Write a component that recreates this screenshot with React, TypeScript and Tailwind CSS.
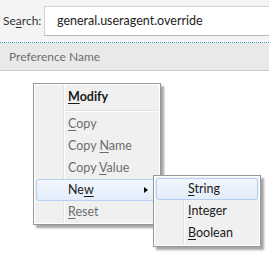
import React from 'react';

const font = { fontFamily: 'Lato, "Open Sans", sans-serif' };

function Key({ children }: { children: React.ReactNode }) {
  return <span className="underline underline-offset-2 decoration-1">{children}</span>;
}

function Item({
  children,
  disabled,
  bold,
  active,
  arrow,
}: {
  children: React.ReactNode;
  disabled?: boolean;
  bold?: boolean;
  active?: boolean;
  arrow?: boolean;
}) {
  return (
    <div
      className={
        'relative flex items-center h-[22px] pl-[31px] pr-2 rounded-[3px] border ' +
        (active
          ? 'border-[#b4cff2] bg-gradient-to-b from-[#f3f7fd] to-[#e2ecfa] '
          : 'border-transparent ') +
        (disabled ? 'text-[#6d6d6d] ' : 'text-[#1a1a1a] ') +
        (bold ? 'font-bold ' : '')
      }
    >
      <span className="flex-1">{children}</span>
      {arrow && (
        <span className="w-0 h-0 border-y-[3.5px] border-y-transparent border-l-[4px] border-l-black mr-[1px]" />
      )}
    </div>
  );
}

function Separator() {
  return (
    <div className="h-[5px] flex flex-col justify-center pl-[29px]">
      <div className="h-px bg-[#e0e0e0]" />
      <div className="h-px bg-white" />
    </div>
  );
}

export default function App() {
  return (
    <div className="relative w-[269px] h-[257px] bg-white overflow-hidden text-[12.5px]" style={font}>
      {/* search bar */}
      <div className="flex items-stretch h-[36px] pt-[6px] bg-[#f3f4f5]">
        <div className="w-[44px] pl-[3px] flex items-center text-[#333] text-[12px]">
          Se<Key>a</Key>rch:
        </div>
        <div className="flex-1 flex items-center pl-[12px] bg-white border-t border-l border-[#cfd2d5] border-b border-b-[#b9b9b9] text-[#222] text-[12.5px]">
          general.useragent.override
        </div>
      </div>
      <div className="h-[6px] bg-[#f3f4f5]" />
      <div className="h-px border-t border-dotted border-[#3aa3b8]" />
      {/* column header */}
      <div className="h-[28px] flex items-center pl-[9px] bg-[#e9e9e9] border-b border-[#cacaca] text-[#6e6e6e] text-[12px]">
        Preference Name
      </div>

      {/* context menu */}
      <div className="absolute left-[33px] top-[83px] w-[128px] border border-[#979797] bg-[#f0f0f0] shadow-[3px_3px_2px_rgba(0,0,0,0.35)] text-[12.5px]">
        <div className="relative border border-white p-[1px] pb-0">
          <div className="absolute left-[28px] top-0 bottom-0 w-[2px] flex">
            <div className="w-px bg-[#e2e3e3]" />
            <div className="w-px bg-white" />
          </div>
          <Item bold>
            <Key>M</Key>odify
          </Item>
          <Separator />
          <Item disabled>
            <Key>C</Key>opy
          </Item>
          <Item disabled>
            Copy <Key>N</Key>ame
          </Item>
          <Item disabled>
            Copy <Key>V</Key>alue
          </Item>
          <Item active arrow>
            Ne<Key>w</Key>
          </Item>
          <Item disabled>
            <Key>R</Key>eset
          </Item>
        </div>
      </div>

      {/* submenu */}
      <div className="absolute left-[153px] top-[175px] w-[108px] border border-[#979797] bg-[#f0f0f0] shadow-[3px_3px_2px_rgba(0,0,0,0.35)] text-[12.5px]">
        <div className="relative border border-white p-[1px]">
          <div className="absolute left-[28px] top-0 bottom-0 w-[2px] flex">
            <div className="w-px bg-[#e2e3e3]" />
            <div className="w-px bg-white" />
          </div>
          <Item active>
            <Key>S</Key>tring
          </Item>
          <Item>
            <Key>I</Key>nteger
          </Item>
          <Item>
            <Key>B</Key>oolean
          </Item>
        </div>
      </div>
    </div>
  );
}
